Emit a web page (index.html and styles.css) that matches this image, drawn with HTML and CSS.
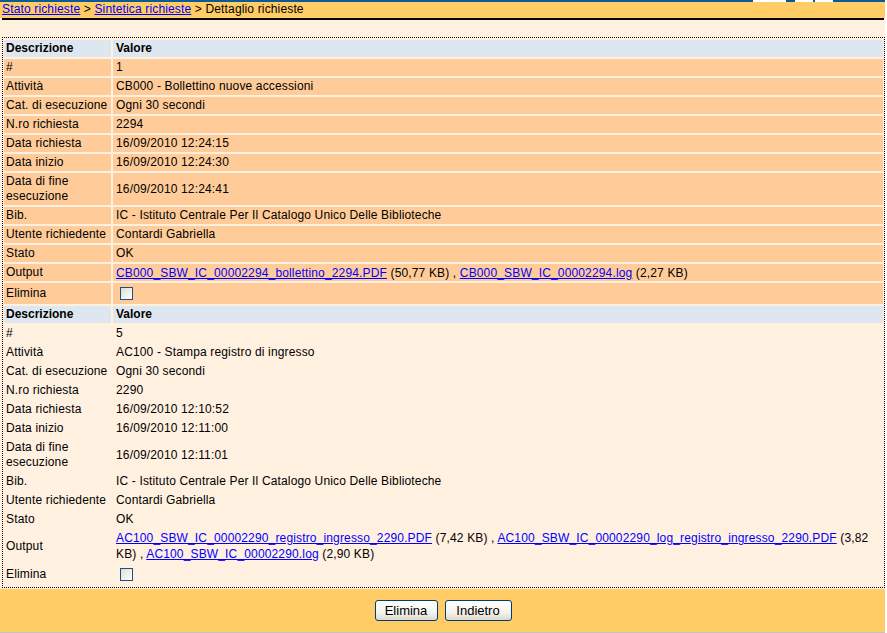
FILE: index.html
```html
<!DOCTYPE html>
<html>
<head>
<meta charset="utf-8">
<link rel="stylesheet" href="styles.css">
</head>
<body>
<div class="page">
  <div class="topstrip"></div>
  <div class="crumbs">
    <a href="#">Stato richieste</a> &gt; <a href="#">Sintetica richieste</a> &gt; Dettaglio richieste
  </div>
  <div class="rule"></div>
  <div class="spacer"></div>
  <div class="box">
    <table class="detail">
      <tr class="head"><td class="c1">Descrizione</td><td>Valore</td></tr>
      <tr class="hl"><td class="c1">#</td><td>1</td></tr>
      <tr class="hl"><td class="c1">Attività</td><td>CB000 - Bollettino nuove accessioni</td></tr>
      <tr class="hl"><td class="c1">Cat. di esecuzione</td><td>Ogni 30 secondi</td></tr>
      <tr class="hl"><td class="c1">N.ro richiesta</td><td>2294</td></tr>
      <tr class="hl"><td class="c1">Data richiesta</td><td>16/09/2010 12:24:15</td></tr>
      <tr class="hl"><td class="c1">Data inizio</td><td>16/09/2010 12:24:30</td></tr>
      <tr class="hl"><td class="c1">Data di fine esecuzione</td><td>16/09/2010 12:24:41</td></tr>
      <tr class="hl"><td class="c1">Bib.</td><td>IC - Istituto Centrale Per Il Catalogo Unico Delle Biblioteche</td></tr>
      <tr class="hl"><td class="c1">Utente richiedente</td><td>Contardi Gabriella</td></tr>
      <tr class="hl"><td class="c1">Stato</td><td>OK</td></tr>
      <tr class="hl"><td class="c1">Output</td><td class="out"><a href="#">CB000_SBW_IC_00002294_bollettino_2294.PDF</a> (50,77 KB) , <a href="#">CB000_SBW_IC_00002294.log</a> (2,27 KB)</td></tr>
      <tr class="hl"><td class="c1">Elimina</td><td><input type="checkbox" class="chk"></td></tr>
      <tr class="head"><td class="c1">Descrizione</td><td>Valore</td></tr>
      <tr><td class="c1">#</td><td>5</td></tr>
      <tr><td class="c1">Attività</td><td>AC100 - Stampa registro di ingresso</td></tr>
      <tr><td class="c1">Cat. di esecuzione</td><td>Ogni 30 secondi</td></tr>
      <tr><td class="c1">N.ro richiesta</td><td>2290</td></tr>
      <tr><td class="c1">Data richiesta</td><td>16/09/2010 12:10:52</td></tr>
      <tr><td class="c1">Data inizio</td><td>16/09/2010 12:11:00</td></tr>
      <tr><td class="c1">Data di fine esecuzione</td><td>16/09/2010 12:11:01</td></tr>
      <tr><td class="c1">Bib.</td><td>IC - Istituto Centrale Per Il Catalogo Unico Delle Biblioteche</td></tr>
      <tr><td class="c1">Utente richiedente</td><td>Contardi Gabriella</td></tr>
      <tr><td class="c1">Stato</td><td>OK</td></tr>
      <tr><td class="c1">Output</td><td class="out"><a href="#">AC100_SBW_IC_00002290_registro_ingresso_2290.PDF</a> (7,42 KB) , <a href="#">AC100_SBW_IC_00002290_log_registro_ingresso_2290.PDF</a> <span>(3,82</span><br><span>KB) ,</span> <a href="#">AC100_SBW_IC_00002290.log</a> (2,90 KB)</td></tr>
      <tr><td class="c1">Elimina</td><td><input type="checkbox" class="chk"></td></tr>
    </table>
  </div>
  <div class="footer">
    <button class="btn btn-del">Elimina</button>
    <button class="btn btn-back">Indietro</button>
  </div>
</div>
</body>
</html>
```
FILE: styles.css
```css
html, body {
  margin: 0;
  padding: 0;
  background: #ffffff;
}
body {
  font-family: "Liberation Sans", Arial, sans-serif;
  font-size: 12px;
  letter-spacing: 0.15px;
  color: #000;
}
.page {
  width: 885px;
  background: #fff0e0;
  border-bottom: 3px solid #c4c4c0;
}
.topstrip {
  height: 2px;
  background: linear-gradient(to right,
    #0b5a96 0, #0b5a96 753px, #ffffff 753px, #ffffff 786px,
    #0b5a96 786px, #0b5a96 795px, #ffffff 795px, #ffffff 813px,
    #0b5a96 813px, #0b5a96 815px, #ffffff 815px, #ffffff 833px,
    #0b5a96 833px);
}
.crumbs {
  background: #ffcc66;
  height: 16px;
  line-height: 15px;
  padding-left: 2px;
}
.crumbs a {
  color: #0000ff;
}
.rule {
  height: 2px;
  background: #000;
  margin: 0 1px 0 2px;
}
.spacer {
  height: 17px;
}
.box {
  margin-left: 2px;
  border: 1px dotted #000;
}
.detail {
  border-collapse: separate;
  border-spacing: 2px;
  margin: 0 -1px;
  width: calc(100% + 2px);
}
.detail td {
  padding: 1px 2px;
  line-height: 15px;
  vertical-align: middle;
}
.detail td + td {
  padding-left: 3px;
}
.detail td.out {
  line-height: 16px;
  padding-top: 0;
  padding-bottom: 0;
}
.detail .c1 {
  width: 103px;
}
.detail tr.head td {
  background: #dee7f0;
  font-weight: bold;
  letter-spacing: 0;
}
.detail tr.hl td {
  background: #ffcc99;
}
.detail a {
  color: #0000ff;
}
.chk {
  -webkit-appearance: none;
  appearance: none;
  width: 13px;
  height: 13px;
  margin: 3px 3px 3px 4px;
  border: 1px solid #1c5180;
  background: linear-gradient(135deg, #dcdcd7 0%, #ffffff 100%);
  vertical-align: middle;
  display: inline-block;
}
.footer {
  background: #ffcc66;
  margin-top: 1px;
  height: 43px;
  display: flex;
  justify-content: center;
  align-items: center;
  gap: 7px;
  padding-left: 1px;
}
.btn {
  font-family: "Liberation Sans", Arial, sans-serif;
  font-size: 13px;
  height: 21px;
  padding: 0;
  border: 1px solid #003c74;
  border-radius: 3px;
  background: linear-gradient(to bottom, #ffffff 0%, #f4f3ee 60%, #dcd9cf 100%);
  color: #000;
}
.btn-del { width: 63px; }
.btn-back { width: 67px; }
```
